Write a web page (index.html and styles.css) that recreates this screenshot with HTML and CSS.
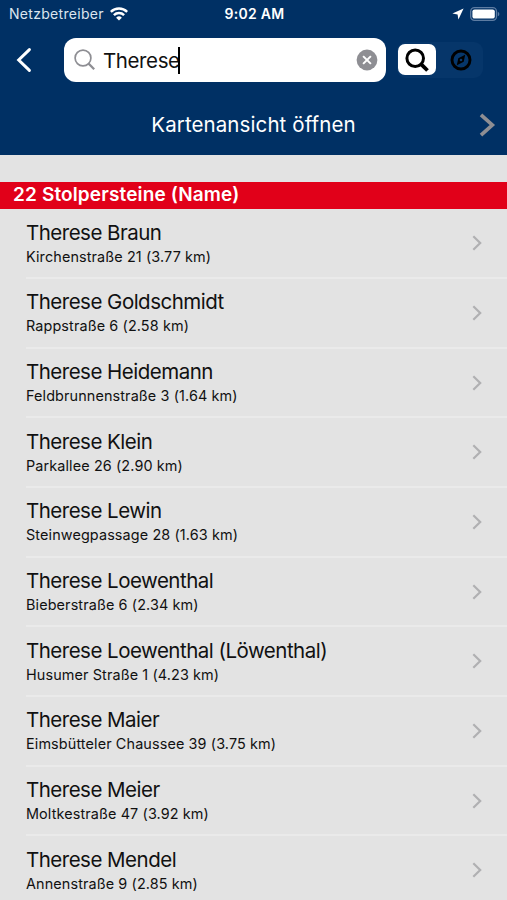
FILE: index.html
```html
<!DOCTYPE html>
<html lang="de">
    <head>
        <meta charset="UTF-8" />
        <meta name="viewport" content="width=device-width, initial-scale=1.0" />
        <title>Stolpersteine</title>
        <link rel="stylesheet" href="styles.css">
    </head>
    <body>
        <header>
            <div class="status">
                <div class="carrier">
                    <span>Netzbetreiber</span>
                    <svg width="18" height="14" viewBox="0 0 18 14" fill="none" stroke="#fff" stroke-width="2.5">
                        <path d="M0.8 4.9a11.8 11.8 0 0 1 16.4 0" />
                        <path d="M3.9 8.1a7.3 7.3 0 0 1 10.2 0" />
                        <path d="M9 13.6L6.1 10.7a4.2 4.2 0 0 1 5.8 0z" fill="#fff" stroke="none" />
                    </svg>
                </div>
                <span class="time">9:02 AM</span>
                <div class="indicators">
                    <svg width="12" height="12" viewBox="0 0 12 12"><path d="M11.6 0.4L0.4 5.6l5.2 0.8 0.8 5.2z" fill="#fff" /></svg>
                    <svg width="30" height="14" viewBox="0 0 30 14">
                        <rect x="0.7" y="0.7" width="25.8" height="12.6" rx="3.8" fill="none" stroke="#5d7ca2" stroke-width="1.3" />
                        <rect x="2.4" y="2.4" width="22.4" height="9.2" rx="2.2" fill="#fff" />
                        <path d="M27.8 4.7v4.6q1.6-.7 1.6-2.3t-1.6-2.3z" fill="#5d7ca2" />
                    </svg>
                </div>
            </div>
            <div class="nav">
                <svg class="back" width="16" height="26" viewBox="0 0 16 26" fill="none" stroke="#fff" stroke-width="3"><path d="M13.4 2.6L2.7 13l10.7 10.4" stroke-linecap="round" /></svg>
                <div class="search">
                    <svg width="22" height="22" viewBox="0 0 22 22" fill="none" stroke="#8e8e93" stroke-width="1.7"><circle cx="9" cy="9" r="7.9" /><path d="M14.6 14.6l5.6 5.6" stroke-width="2.2" /></svg>
                    <span class="query">Therese</span>
                    <span class="caret"></span>
                    <svg class="clear" width="22" height="22" viewBox="0 0 22 22"><circle cx="11" cy="11" r="10.4" fill="#8e8e93" /><path d="M7.1 7.1l7.8 7.8M14.9 7.1l-7.8 7.8" stroke="#fff" stroke-width="2" /></svg>
                </div>
                <div class="modes">
                    <div class="mode active">
                        <svg width="24" height="24" viewBox="0 0 24 24" fill="none" stroke="#000" stroke-width="3"><circle cx="10.2" cy="10.2" r="8.3" /><path d="M16.3 16.3l6.2 6.2" stroke-width="3.8" /></svg>
                    </div>
                    <div class="mode">
                        <svg width="22" height="22" viewBox="0 0 22 22"><circle cx="11" cy="11" r="9" fill="none" stroke="#000" stroke-width="2.9" /><path d="M15.2 5.8l-1.5 7-6.9 3.4 1.5-7z" fill="#000" /><circle cx="11" cy="11" r="1.3" fill="#0c376a" /></svg>
                    </div>
                </div>
            </div>
            <div class="map-link">
                <span>Kartenansicht öffnen</span>
                <svg width="17" height="24" viewBox="0 0 17 24" fill="none" stroke="#8e8e93" stroke-width="3.7"><path d="M2 1.8L13.3 12 2 22.2" /></svg>
            </div>
        </header>
        <h2>22 Stolpersteine (Name)</h2>
        <ul class="results"></ul>
        <script>
            const stones = [
                ["Therese Braun", "Kirchenstraße 21 (3.77 km)"],
                ["Therese Goldschmidt", "Rappstraße 6 (2.58 km)"],
                ["Therese Heidemann", "Feldbrunnenstraße 3 (1.64 km)"],
                ["Therese Klein", "Parkallee 26 (2.90 km)"],
                ["Therese Lewin", "Steinwegpassage 28 (1.63 km)"],
                ["Therese Loewenthal", "Bieberstraße 6 (2.34 km)"],
                ["Therese Loewenthal (Löwenthal)", "Husumer Straße 1 (4.23 km)"],
                ["Therese Maier", "Eimsbütteler Chaussee 39 (3.75 km)"],
                ["Therese Meier", "Moltkestraße 47 (3.92 km)"],
                ["Therese Mendel", "Annenstraße 9 (2.85 km)"],
            ]

            const results = document.querySelector(".results")
            stones.forEach(([name, address]) => {
                const li = document.createElement("li")
                li.innerHTML = `
                    <div>
                        <p class="name">${name}</p>
                        <p class="address">${address}</p>
                    </div>
                    <svg width="10" height="16" viewBox="0 0 10 16" fill="none" stroke="#b0b0b2" stroke-width="2.2"><path d="M1.3 1.3L8.2 8l-6.9 6.7" /></svg>`
                results.appendChild(li)
            })
        </script>
    </body>
</html>
```
FILE: styles.css
```css
:root {
    --blue: #003064;
    --red: #e10019;
    --grey: #e3e3e3;
}
* {
    box-sizing: border-box;
}
body {
    margin: 0;
    height: 900px;
    overflow: hidden;
    background-color: var(--grey);
    font-family: Inter, "Liberation Sans", sans-serif;
    color: #111;
}
svg {
    display: block;
    flex: none;
}
header {
    height: 154.5px;
    background-color: var(--blue);
    color: white;
}
.status {
    display: grid;
    grid-template-columns: 1fr auto 1fr;
    align-items: center;
    height: 27px;
    padding: 0 7px 0 9px;
    font-size: 14px;
}
.carrier {
    display: flex;
    align-items: center;
    gap: 6px;
    color: #dce5ef;
    letter-spacing: 0.3px;
}
.time {
    font-weight: 600;
    letter-spacing: 0.3px;
}
.indicators {
    display: flex;
    justify-content: flex-end;
    align-items: center;
    gap: 6px;
}
.nav {
    display: flex;
    align-items: center;
    height: 66px;
    padding: 0 24px 0 16px;
}
.search {
    display: flex;
    align-items: center;
    width: 322px;
    height: 44px;
    margin: 0 11px 0 32px;
    padding: 0 8px 0 10px;
    border-radius: 12px;
    background-color: white;
    color: #111;
}
.query {
    margin-left: 7px;
    font-size: 20.5px;
    letter-spacing: -0.4px;
}
.caret {
    width: 2px;
    height: 27px;
    margin-left: -1.5px;
    background-color: black;
}
.clear {
    margin-left: auto;
}
.modes {
    display: flex;
    width: 86px;
    height: 36px;
    padding: 2px 1px;
    border-radius: 9px;
    background-color: #06366a;
}
.mode {
    display: flex;
    align-items: center;
    justify-content: center;
    flex: 1;
}
.mode.active {
    flex: 0 0 38px;
    height: 31px;
    margin-right: 4px;
    border-radius: 7px;
    background-color: white;
}
.map-link {
    display: grid;
    grid-template-columns: 1fr auto 1fr;
    align-items: center;
    height: 63px;
    padding: 0 11px;
    font-size: 20.5px;
    letter-spacing: 0.1px;
}
.map-link span {
    grid-column: 2;
}
.map-link svg {
    justify-self: end;
}
h2 {
    height: 27px;
    margin: 27px 0 0 0;
    padding-left: 13px;
    background-color: var(--red);
    color: white;
    font-size: 19px;
    font-weight: 600;
    letter-spacing: 0.14px;
    line-height: 26px;
}
.results {
    margin: 0;
    padding: 1px 0 0 26px;
    list-style: none;
}
.results li {
    display: flex;
    align-items: center;
    justify-content: space-between;
    height: 69.67px;
    padding-right: 25px;
    border-bottom: 2px solid #eaeaea;
}
.name {
    margin: 0;
    padding-top: 1px;
    font-size: 20.5px;
    letter-spacing: -0.51px;
    line-height: 26px;
}
.address {
    margin: 0;
    font-size: 14.4px;
    letter-spacing: 0.12px;
    line-height: 22px;
}
```
